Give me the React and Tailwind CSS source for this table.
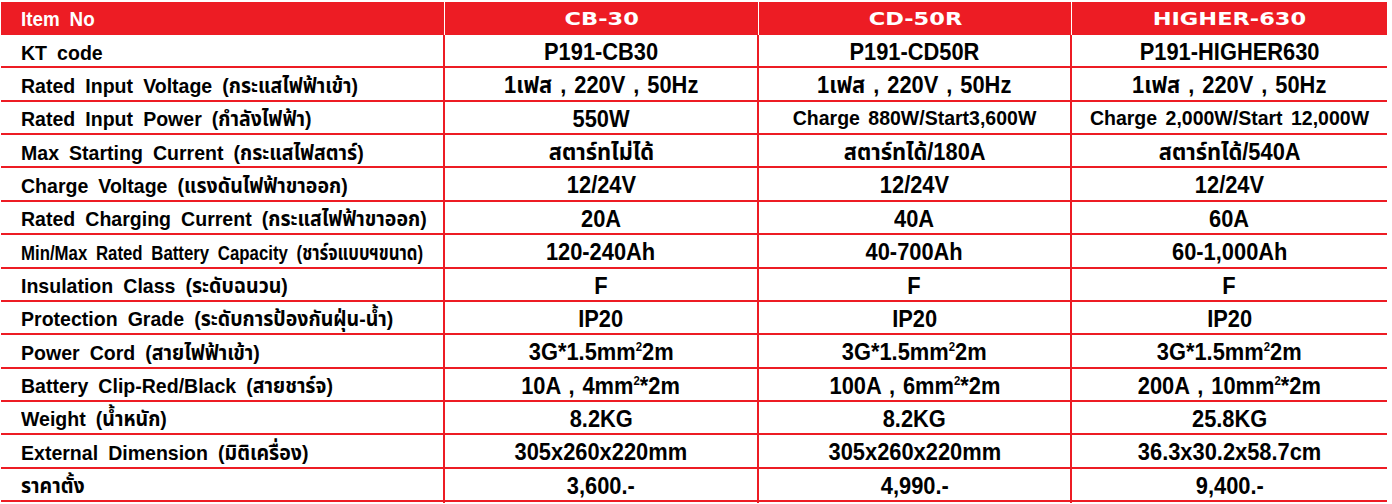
import React from "react";

const rows = [
  ["KT code", "P191-CB30", "P191-CD50R", "P191-HIGHER630"],
  ["Rated Input Voltage (กระแสไฟฟ้าเข้า)", "1เฟส , 220V , 50Hz", "1เฟส , 220V , 50Hz", "1เฟส , 220V , 50Hz"],
  ["Rated Input Power (กำลังไฟฟ้า)", "550W", "Charge 880W/Start3,600W", "Charge 2,000W/Start 12,000W"],
  ["Max Starting Current (กระแสไฟสตาร์)", "สตาร์ทไม่ได้", "สตาร์ทได้/180A", "สตาร์ทได้/540A"],
  ["Charge Voltage (แรงดันไฟฟ้าขาออก)", "12/24V", "12/24V", "12/24V"],
  ["Rated Charging Current (กระแสไฟฟ้าขาออก)", "20A", "40A", "60A"],
  ["Min/Max Rated Battery Capacity (ชาร์จแบบฯขนาด)", "120-240Ah", "40-700Ah", "60-1,000Ah"],
  ["Insulation Class (ระดับฉนวน)", "F", "F", "F"],
  ["Protection Grade (ระดับการป้องกันฝุ่น-น้ำ)", "IP20", "IP20", "IP20"],
  ["Power Cord (สายไฟฟ้าเข้า)", "cord", "cord", "cord"],
  ["Battery Clip-Red/Black (สายชาร์จ)", "clip1", "clip2", "clip3"],
  ["Weight (น้ำหนัก)", "8.2KG", "8.2KG", "25.8KG"],
  ["External Dimension (มิติเครื่อง)", "305x260x220mm", "305x260x220mm", "36.3x30.2x58.7cm"],
  ["ราคาตั้ง", "3,600.-", "4,990.-", "9,400.-"],
];

function Sup() {
  return <sup className="text-[12px] relative -top-[9px]">2</sup>;
}

function Value({ v }) {
  if (v === "cord")
    return (
      <>
        3G*1.5mm<Sup />2m
      </>
    );
  if (v === "clip1")
    return (
      <>
        10A , 4mm<Sup />*2m
      </>
    );
  if (v === "clip2")
    return (
      <>
        100A , 6mm<Sup />*2m
      </>
    );
  if (v === "clip3")
    return (
      <>
        200A , 10mm<Sup />*2m
      </>
    );
  return <>{v}</>;
}

const font = "font-['Liberation_Sans','Noto_Sans_Thai','Noto_Sans',sans-serif]";

export default function App() {
  return (
    <div className={`w-[1392px] h-[504px] bg-white pt-[2px] pl-[1px] text-black ${font} font-bold`}>
      <div className="w-[1386px]">
        <div className="grid grid-cols-[444px_314px_313px_315px] h-[33px] bg-[#ed1c24] text-white">
          <div className="border-r border-white pl-[20px] flex items-center text-[20px]">
            <span className="inline-block origin-left scale-x-[0.94] whitespace-nowrap [word-spacing:5px]">Item No</span>
          </div>
          {["CB-30", "CD-50R", "HIGHER-630"].map((h, i) => (
            <div
              key={h}
              className={`flex items-center justify-center ${i < 2 ? "border-r border-white" : ""}`}
            >
              <span className="font-['DejaVu_Sans',sans-serif] font-bold text-[18px] scale-x-125 inline-block">{h}</span>
            </div>
          ))}
        </div>
        {rows.map((r) => (
          <div
            key={r[0]}
            className="grid grid-cols-[444px_314px_313px_315px] h-[33.36px] border-b-2 border-[#ed1c24]"
          >
            <div className="border-r-2 border-[#ed1c24] pl-[20px] flex items-center text-[21px] whitespace-nowrap">
              <span
                className={`inline-block origin-left whitespace-nowrap [word-spacing:5px] ${
                  r[0].startsWith("Min/Max") ? "scale-x-[0.80]" : "scale-x-[0.93]"
                }`}
              >
                {r[0]}
              </span>
            </div>
            {r.slice(1).map((v, i) => (
              <div
                key={i}
                className={`flex items-center justify-center whitespace-nowrap ${
                  i < 2 ? "border-r-2 border-[#ed1c24]" : ""
                }`}
              >
                {v.startsWith("Charge ") ? (
                  <span className="inline-block text-[19.5px] whitespace-nowrap [word-spacing:3px]">{v}</span>
                ) : (
                  <span className="inline-block text-[23px] scale-x-[0.95] whitespace-nowrap [word-spacing:2px]">
                    <Value v={v} />
                  </span>
                )}
              </div>
            ))}
          </div>
        ))}
      </div>
    </div>
  );
}
